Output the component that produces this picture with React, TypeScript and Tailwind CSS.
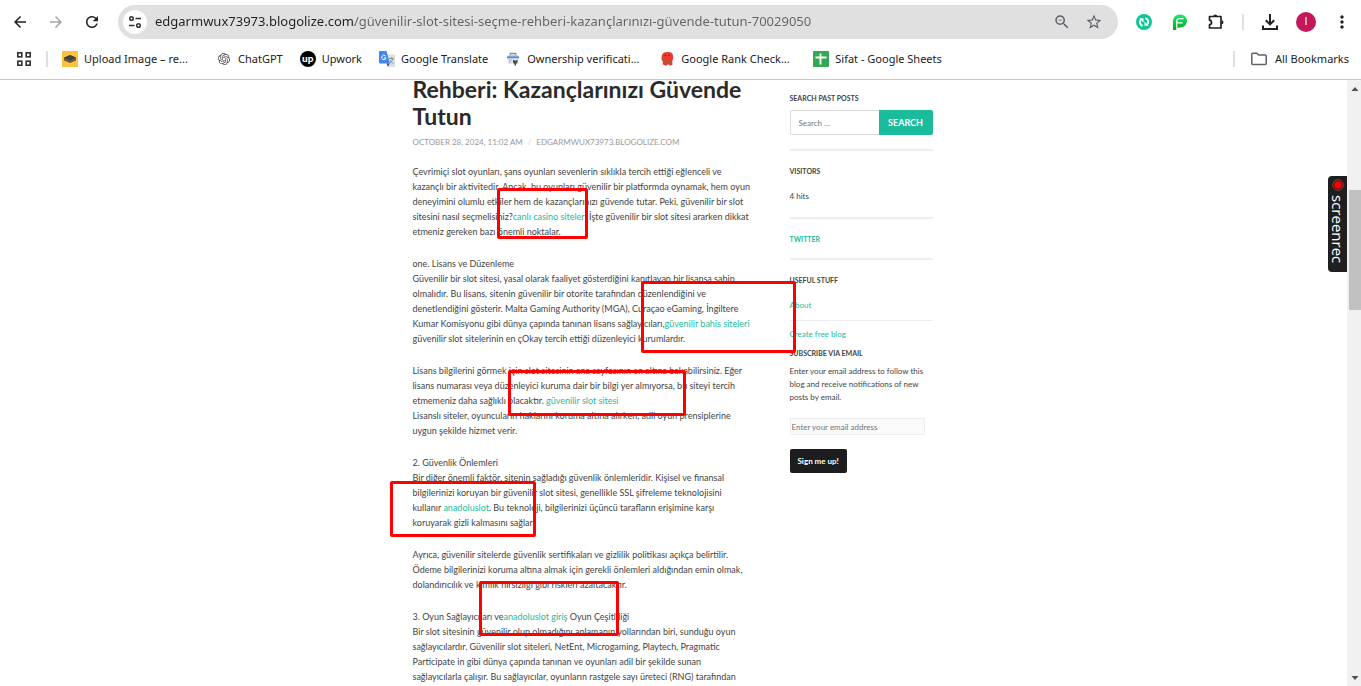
import type { ReactNode } from "react";
import {
  MdArrowBack,
  MdArrowForward,
  MdRefresh,
  MdStarBorder,
  MdZoomOut,
  MdMoreVert,
} from "react-icons/md";
import { SiOpenai } from "react-icons/si";

const uiFont = "font-['Noto_Sans','Open_Sans',sans-serif]";
const bodyFont = "font-[Lato,sans-serif]";

function SiteInfoIcon() {
  return (
    <svg viewBox="0 0 16 16" className="size-4" fill="none" stroke="#303134" strokeWidth="1.5">
      <circle cx="4.5" cy="4.5" r="1.8" />
      <path d="M8.5 4.5H14M2 11.5h5.5" />
      <circle cx="11.5" cy="11.5" r="1.8" />
    </svg>
  );
}

function AppsIcon() {
  return (
    <svg viewBox="0 0 14 14" className="size-3.5" fill="none" stroke="#303134" strokeWidth="1.6">
      <rect x=".8" y=".8" width="4" height="4" />
      <rect x="9.2" y=".8" width="4" height="4" />
      <rect x=".8" y="9.2" width="4" height="4" />
      <rect x="9.2" y="9.2" width="4" height="4" />
    </svg>
  );
}

function SyncBadge() {
  return (
    <svg viewBox="0 0 16 16" className="size-4">
      <circle cx="8" cy="8" r="8" fill="#0fc795" />
      <path d="M6.600 11.800C4 10.900 3 7.800 4.800 5.500" fill="none" stroke="#fff" strokeWidth="1.900" />
      <path d="M3.200 4.200h4.300v4.200z" fill="#fff" />
      <path d="M9.400 4.200c2.600.9 3.600 4 1.800 6.300" fill="none" stroke="#fff" strokeWidth="1.900" />
      <path d="M12.800 11.800H8.500V7.600z" fill="#fff" />
    </svg>
  );
}

function LetterPBadge() {
  return (
    <svg viewBox="0 0 16 16" className="size-4">
      <defs>
        <linearGradient id="pg" x1="0" y1="0" x2="0" y2="1">
          <stop offset="0" stopColor="#12ee6c" />
          <stop offset="1" stopColor="#06a51f" />
        </linearGradient>
      </defs>
      <path d="M1 16V7a6.500 6.500 0 0 1 6.500-6.500h1a6.500 6.500 0 0 1 0 13H4.200V16Z" fill="url(#pg)" />
      <path d="M4.700 13.500V7.500c0-2 1-2.900 2.800-2.900h4M4.700 8.800h6" stroke="#fff" strokeWidth="1.200" fill="none" />
    </svg>
  );
}

function PuzzleIcon() {
  return (
    <svg viewBox="0 0 18 18" className="size-[18px]">
      <path
        d="M2.500 3.500h11.500v11.500H2.500v-3.300c1.300-.2 2-1.200 2-2.300s-.7-2.100-2-2.300z"
        fill="none"
        stroke="#202124"
        strokeWidth="1.700"
        strokeLinejoin="round"
      />
      <path d="M6.300 3.500a2 2 0 0 1 4 0zM14.500 7.300a2 2 0 0 1 0 4z" fill="#202124" />
    </svg>
  );
}

function DownloadIcon() {
  return (
    <svg viewBox="0 0 18 18" className="size-[18px]" fill="none" stroke="#202124" strokeWidth="2">
      <path d="M9 1v10M4.800 7.200L9 11.400l4.200-4.200M2 12.500V16h14v-3.500" />
    </svg>
  );
}

function FolderIcon() {
  return (
    <svg viewBox="0 0 16 14" className="h-3.5 w-4" fill="none" stroke="#5f6368" strokeWidth="1.500" strokeLinejoin="round">
      <path d="M.8 2.200c0-.6.400-1 1-1H6l1.600 1.800h6.600c.6 0 1 .4 1 1v7.600c0 .6-.4 1-1 1H1.800c-.6 0-1-.4-1-1z" />
    </svg>
  );
}

function LayersIcon() {
  return (
    <svg viewBox="0 0 16 16" className="size-4">
      <path d="M0 0h16v16H0z" fill="#fdc23c" />
      <path d="M8 4l6 2.500v3L8 12 2 9.500v-3z" fill="#6b5a35" />
      <path d="M8 4l6 2.700-6 2.700-6-2.700z" fill="#3d4244" />
    </svg>
  );
}

function TranslateIcon() {
  return (
    <svg viewBox="0 0 16 16" className="size-4">
      <path d="M6 3.500h9a1 1 0 0 1 1 1V15a1 1 0 0 1-1 1H9.500z" fill="#dcdee1" />
      <path d="M1 0h6.500l3.300 12.500H1a1 1 0 0 1-1-1V1a1 1 0 0 1 1-1z" fill="#4486f4" />
      <path d="M7.500 12.500h3.300L8.800 16z" fill="#3a50c9" />
      <path d="M6.500 5A2.200 2.200 0 1 0 7 6.900H4.800" stroke="#fff" strokeWidth="1" fill="none" />
      <path d="M9.800 7.500h5M12.300 6.300v1.200M13.800 7.500c-.3 2-1.600 3.700-3 4.700M11 9c.6 1.500 2 2.700 3.300 3.300" stroke="#7a8a99" strokeWidth=".9" fill="none" />
    </svg>
  );
}

function ConsoleIcon() {
  return (
    <svg viewBox="0 0 16 16" className="size-4">
      <path d="M5.300 4V2.500h5.400V4" stroke="#8b8f94" strokeWidth="1.300" fill="none" />
      <path d="M4 4h8l2 2H2z" fill="#c4c7cb" />
      <path d="M2 5.500h12v2H2z" fill="#4285f4" />
      <path d="M3 7.500h10.500V13H3z" fill="#e6e8ea" />
      <path d="M4 9h3M4 11h2" stroke="#a9adb2" />
      <path d="M8 8.500l1.500 1h1.500l1.500-1v3L11 13v1.500H9.500V13L8 11.500z" fill="#4a4d50" />
    </svg>
  );
}

function RankIcon() {
  return (
    <svg viewBox="0 0 16 16" className="size-4">
      <path d="M4.500 2C6.500.8 11 .8 13 2.200c1.600 1.800 1.500 5.600.2 7.800l.3 3.800-2.500.9-1.400-1.500-3 1.500-3-1.400.3-2.500C1.900 8.500 2.200 3.800 4.500 2z" fill="#ea3a31" />
      <path d="M2.400 6.500l10.400 5-.2 2-9.300-4.200z" fill="#a8632d" />
      <circle cx="6.300" cy="4.300" r=".7" fill="#7c1512" />
      <circle cx="10" cy="4.300" r=".7" fill="#7c1512" />
    </svg>
  );
}

function SheetsIcon() {
  return (
    <svg viewBox="0 0 16 16" className="size-4">
      <rect width="16" height="16" rx="1" fill="#34a853" />
      <path d="M2.500 6.500h11M7.500 2.500v11" stroke="#fff" strokeWidth="1.800" />
    </svg>
  );
}

const bookmarks: { label: string; icon: ReactNode; wide?: boolean }[] = [
  { label: "Upload Image – re...", icon: <LayersIcon />, wide: true },
  { label: "ChatGPT", icon: <SiOpenai className="size-3 text-[#4a4a4a]" /> },
  {
    label: "Upwork",
    icon: (
      <span className="flex size-4 items-center justify-center rounded-full bg-black pb-0.5 font-[Lato,sans-serif] text-[10px] font-black text-white">
        up
      </span>
    ),
  },
  { label: "Google Translate", icon: <TranslateIcon /> },
  { label: "Ownership verificati...", icon: <ConsoleIcon />, wide: true },
  { label: "Google Rank Check...", icon: <RankIcon />, wide: true },
  { label: "Sifat - Google Sheets", icon: <SheetsIcon /> },
];

function BrowserBar() {
  return (
    <header className={`shrink-0 border-b border-[#c8caca] bg-white text-[#202124] ${uiFont}`}>
      <div className="flex h-11 items-center pr-[9px] pl-2.5">
        <div className="flex w-[108px] items-center gap-4">
          <button type="button" aria-label="Back" className="flex size-5 items-center justify-center">
            <MdArrowBack className="size-[18px]" />
          </button>
          <button type="button" aria-label="Forward" className="flex size-5 items-center justify-center text-[#a3a4a6]">
            <MdArrowForward className="size-[18px]" />
          </button>
          <button type="button" aria-label="Reload" className="flex size-5 items-center justify-center">
            <MdRefresh className="size-[18px]" />
          </button>
        </div>
        <div className="flex h-[34px] flex-1 items-center rounded-full bg-[#e0e0e0] pr-3.5 pl-[5px]">
          <button type="button" aria-label="Site information" className="flex size-6 items-center justify-center rounded-full bg-white">
            <SiteInfoIcon />
          </button>
          <input
            type="text"
            aria-label="Address"
            defaultValue="edgarmwux73973.blogolize.com/güvenilir-slot-sitesi-seçme-rehberi-kazançlarınızı-güvende-tutun-70029050"
            className="ml-2 min-w-0 flex-1 bg-[linear-gradient(to_right,#202124_200px,#5f6368_200px)] bg-clip-text text-[13px] text-transparent outline-none"
          />
          <button type="button" aria-label="Zoom" className="flex size-5 items-center justify-center text-[#5f6368]">
            <MdZoomOut className="size-[18px]" />
          </button>
          <button type="button" aria-label="Bookmark this page" className="ml-3 flex size-5 items-center justify-center text-[#5f6368]">
            <MdStarBorder className="size-[18px]" />
          </button>
        </div>
        <div className="ml-4 flex items-center gap-4">
          <button type="button" aria-label="Sync extension" className="flex size-5 items-center justify-center">
            <SyncBadge />
          </button>
          <button type="button" aria-label="P extension" className="flex size-5 items-center justify-center">
            <LetterPBadge />
          </button>
          <button type="button" aria-label="Extensions" className="flex size-5 items-center justify-center">
            <PuzzleIcon />
          </button>
          <span className="h-4 w-0.5 bg-[#e6dcdc]" />
          <button type="button" aria-label="Downloads" className="flex size-5 items-center justify-center">
            <DownloadIcon />
          </button>
          <button type="button" aria-label="Profile" className="flex size-5 items-center justify-center rounded-full bg-[#c2185b] font-[Roboto,sans-serif] text-[11px] text-white">
            I
          </button>
          <button type="button" aria-label="Menu" className="flex size-5 items-center justify-center">
            <MdMoreVert className="size-5" />
          </button>
        </div>
      </div>
      <nav aria-label="Bookmarks" className="flex h-[35px] items-center pr-3 pb-[5px] pl-[17px] text-[11px]">
        <button type="button" aria-label="Apps" className="p-0">
          <AppsIcon />
        </button>
        <span className="mr-3.5 ml-[15px] h-4 w-0.5 bg-[#e6dcdc]" />
        <ul className="flex flex-1 items-center gap-[17px]">
          {bookmarks.map((b) => (
            <li key={b.label} className={b.wide ? "w-[137px]" : ""}>
              <a href="#" className="flex items-center gap-1.5 whitespace-nowrap">
                <span className="flex size-4 shrink-0 items-center justify-center">{b.icon}</span>
                {b.label}
              </a>
            </li>
          ))}
        </ul>
        <span className="mr-4 h-4 w-0.5 bg-[#e6dcdc]" />
        <button type="button" className="flex items-center gap-2 whitespace-nowrap">
          <FolderIcon />
          All Bookmarks
        </button>
      </nav>
    </header>
  );
}

function Lines({ lines }: { lines: ReactNode[] }) {
  return (
    <p>
      {lines.map((line, i) => (
        <span key={i} className="block">
          {line}
        </span>
      ))}
    </p>
  );
}

function TextLink({ children }: { children: ReactNode }) {
  return (
    <a href="#" className="text-[#1abc9c]">
      {children}
    </a>
  );
}

function Article() {
  return (
    <article className="-mt-1 w-[343px] whitespace-nowrap">
      <h1 className="text-[23px] leading-[27px] font-bold text-[#2a2a2a]">
        Rehberi: Kazançlarınızı Güvende
        <br />
        Tutun
      </h1>
      <p className="mt-1 flex gap-[5px] text-[8px] leading-4 text-[#999] uppercase">
        <time>October 28, 2024, 11:02 AM</time>
        <span className="text-[#ccc]">/</span>
        <a href="#">edgarmwux73973.blogolize.com</a>
      </p>
      <div className="mt-3.5 flex flex-col gap-[17px] text-[9px] leading-[15px] text-[#444]">
        <Lines
          lines={[
            "Çevrimiçi slot oyunları, şans oyunları sevenlerin sıklıkla tercih ettiği eğlenceli ve",
            "kazançlı bir aktivitedir. Ancak, bu oyunları güvenilir bir platformda oynamak, hem oyun",
            "deneyimini olumlu etkiler hem de kazançlarınızı güvende tutar. Peki, güvenilir bir slot",
            <>sitesini nasıl seçmelisiniz?<TextLink>canlı casino siteleri</TextLink> İşte güvenilir bir slot sitesi ararken dikkat</>,
            "etmeniz gereken bazı önemli noktalar.",
          ]}
        />
        <Lines
          lines={[
            "one. Lisans ve Düzenleme",
            "Güvenilir bir slot sitesi, yasal olarak faaliyet gösterdiğini kanıtlayan bir lisansa sahip",
            "olmalıdır. Bu lisans, sitenin güvenilir bir otorite tarafından düzenlendiğini ve",
            "denetlendiğini gösterir. Malta Gaming Authority (MGA), Curaçao eGaming, İngiltere",
            <>Kumar Komisyonu gibi dünya çapında tanınan lisans sağlayıcıları,<TextLink>güvenilir bahis siteleri</TextLink></>,
            "güvenilir slot sitelerinin en çOkay tercih ettiği düzenleyici kurumlardır.",
          ]}
        />
        <Lines
          lines={[
            "Lisans bilgilerini görmek için slot sitesinin ana sayfasının en altına bakabilirsiniz. Eğer",
            "lisans numarası veya düzenleyici kuruma dair bir bilgi yer almıyorsa, bu siteyi tercih",
            <>etmemeniz daha sağlıklı olacaktır. <TextLink>güvenilir slot sitesi</TextLink></>,
            "Lisanslı siteler, oyuncuların haklarını koruma altına alırken, adil oyun prensiplerine",
            "uygun şekilde hizmet verir.",
          ]}
        />
        <Lines
          lines={[
            "2. Güvenlik Önlemleri",
            "Bir diğer önemli faktör, sitenin sağladığı güvenlik önlemleridir. Kişisel ve finansal",
            "bilgilerinizi koruyan bir güvenilir slot sitesi, genellikle SSL şifreleme teknolojisini",
            <>kullanır <TextLink>anadoluslot</TextLink>. Bu teknoloji, bilgilerinizi üçüncü tarafların erişimine karşı</>,
            "koruyarak gizli kalmasını sağlar.",
          ]}
        />
        <Lines
          lines={[
            "Ayrıca, güvenilir sitelerde güvenlik sertifikaları ve gizlilik politikası açıkça belirtilir.",
            "Ödeme bilgilerinizi koruma altına almak için gerekli önlemleri aldığından emin olmak,",
            "dolandırıcılık ve kimlik hırsızlığı gibi riskleri azaltacaktır.",
          ]}
        />
        <Lines
          lines={[
            <>3. Oyun Sağlayıcıları ve<TextLink>anadoluslot giriş</TextLink> Oyun Çeşitliliği</>,
            "Bir slot sitesinin güvenilir olup olmadığını anlamanın yollarından biri, sunduğu oyun",
            "sağlayıcılardır. Güvenilir slot siteleri, NetEnt, Microgaming, Playtech, Pragmatic",
            "Participate in gibi dünya çapında tanınan ve oyunları adil bir şekilde sunan",
            "sağlayıcılarla çalışır. Bu sağlayıcılar, oyunların rastgele sayı üreteci (RNG) tarafından",
          ]}
        />
      </div>
    </article>
  );
}

function WidgetTitle({ children }: { children: ReactNode }) {
  return <h2 className="text-[7px] leading-3 font-bold uppercase">{children}</h2>;
}

function Sidebar() {
  return (
    <aside className="w-[143px] pt-3 text-[8px] leading-[14px] text-[#444]">
      <section className="border-b-2 border-[#eee] pb-3.5">
        <WidgetTitle>
          <label htmlFor="search">Search past posts</label>
        </WidgetTitle>
        <form className="mt-1.5 flex h-[25px]">
          <input
            id="search"
            type="search"
            placeholder="Search …"
            className="min-w-0 flex-1 rounded-l-xs border border-r-0 border-[#ddd] px-2 outline-none placeholder:text-[#757575]"
          />
          <button type="button" className="w-[54px] rounded-r-xs bg-[#1abc9c] text-[9px] font-bold text-white uppercase">
            Search
          </button>
        </form>
      </section>
      <section className="border-b-2 border-[#eee] pt-3.5 pb-3.5">
        <WidgetTitle>Visitors</WidgetTitle>
        <p className="mt-3">4 hits</p>
      </section>
      <section className="border-b-2 border-[#eee] pt-3.5 pb-[13px]">
        <WidgetTitle>
          <TextLink>Twitter</TextLink>
        </WidgetTitle>
      </section>
      <section className="pt-3.5">
        <WidgetTitle>Useful stuff</WidgetTitle>
        <ul className="mt-3 flex flex-col">
          <li className="border-b border-[#eee] pb-2">
            <TextLink>About</TextLink>
          </li>
          <li className="pt-1.5">
            <TextLink>Create free blog</TextLink>
          </li>
        </ul>
      </section>
      <section className="mt-1.5">
        <WidgetTitle>Subscribe via email</WidgetTitle>
        <p className="mt-1.5 leading-[13px]">
          Enter your email address to follow this blog and receive notifications of new posts by email.
        </p>
        <form className="mt-3.5 flex flex-col items-start gap-3.5">
          <input
            type="email"
            aria-label="Email address"
            placeholder="Enter your email address"
            className="h-[17px] w-[135px] border border-[#eee] bg-[#fafafa] px-px outline-none placeholder:text-[#757575]"
          />
          <button type="button" className="h-6 rounded-xs bg-[#1d1d1d] px-2 font-bold text-white">
            Sign me up!
          </button>
        </form>
      </section>
    </aside>
  );
}

const highlights = [
  "left-[84px] top-[108px] h-[51px] w-[91px]",
  "left-[228px] top-[201px] h-[72px] w-[155px]",
  "left-[95px] top-[290px] h-[46px] w-[178px]",
  "left-[-23px] top-[401px] h-[56px] w-[146px]",
  "left-[66px] top-[501px] h-[55px] w-[140px]",
];

export default function App() {
  return (
    <div className="flex h-screen flex-col overflow-hidden bg-white">
      <BrowserBar />
      <div className="relative flex min-h-0 flex-1">
        <main className={`flex-1 ${bodyFont}`}>
          <div className="relative mx-auto flex max-w-[522px] justify-between pr-0.5">
            <Article />
            <Sidebar />
            {highlights.map((place) => (
              <div key={place} className={`pointer-events-none absolute rounded-xs border-3 border-[#fe0000] ${place}`} />
            ))}
          </div>
        </main>
        <div className="flex w-3.5 flex-col items-end bg-[#f1f1f1]" aria-hidden="true">
          <svg viewBox="0 0 12 18" className="h-[18px] w-3" fill="#505050">
            <path d="M6 7l3.500 4h-7z" />
          </svg>
          <div className="mt-[92px] h-[120px] w-3 bg-[#c1c1c1]" />
          <svg viewBox="0 0 12 18" className="mt-auto h-[18px] w-3" fill="#505050">
            <path d="M6 12l3.500-4h-7z" />
          </svg>
        </div>
        <button
          type="button"
          className="absolute top-24 right-3.5 flex h-24 w-[19px] flex-col items-center gap-1 rounded-l-sm bg-[#1f1f1f] pt-[3px] text-white"
        >
          <svg viewBox="0 0 12 12" className="size-3 shrink-0">
            <circle cx="6" cy="6" r="5.300" fill="none" stroke="#d33" strokeWidth=".8" />
            <circle cx="6" cy="6" r="3.800" fill="#f00" />
          </svg>
          <span className="font-['Open_Sans',sans-serif] text-[15px] leading-[19px] [writing-mode:vertical-rl]">screenrec</span>
        </button>
      </div>
    </div>
  );
}
